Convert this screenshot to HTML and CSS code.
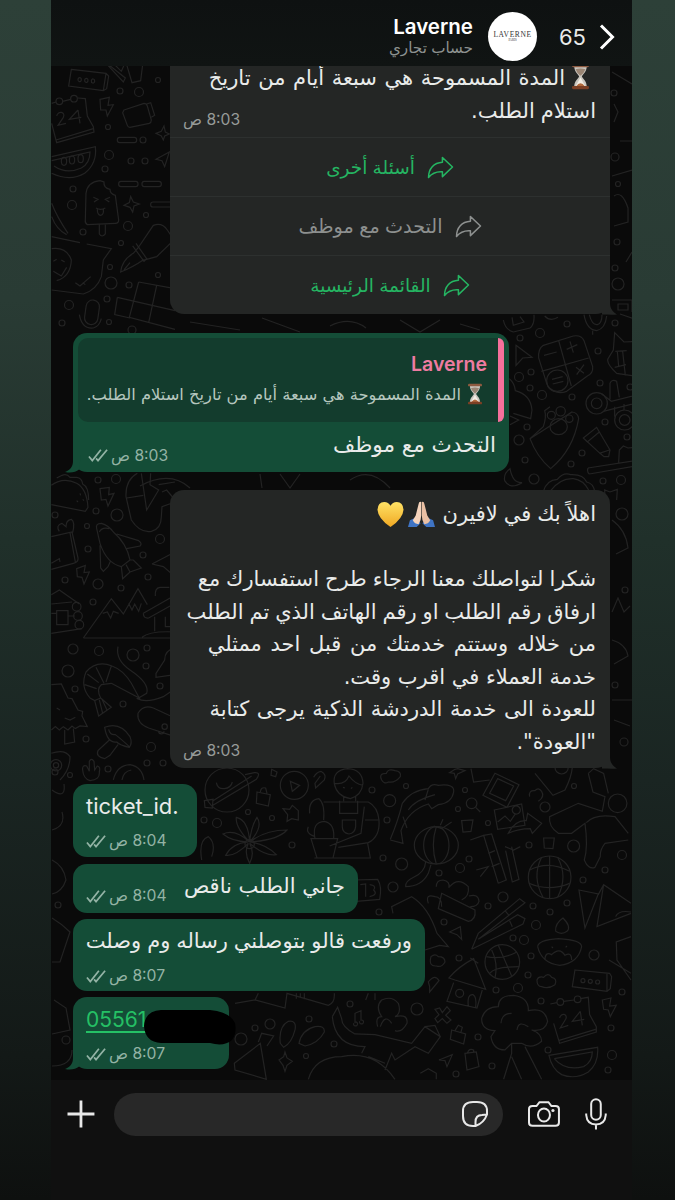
FILE: index.html
```html
<!DOCTYPE html>
<html lang="ar" dir="rtl">

<head>
  <meta charset="UTF-8">
  <meta name="viewport" content="width=device-width, initial-scale=1.0">
  <title>Laverne</title>
  <link rel="stylesheet" href="styles.css">
</head>

<body>
  <svg class="defs" width="0" height="0">
    <defs>
      <symbol id="hourglass" viewBox="0 0 24 30">
        <path d="M5 3C5 10 9 12 10.500 15C9 18 5 20 5 27H19C19 20 15 18 13.500 15C15 12 19 10 19 3Z" fill="#c9c5be" />
        <path d="M6.500 7Q12 5 17.500 7Q16 11 12.500 14H11.500Q8 11 6.500 7Z" fill="#9a8574" />
        <path d="M12 16L17.500 26H6.500Z" fill="#f2ede4" />
        <path d="M7 26Q12 19 17 26Z" fill="#b0683c" />
        <rect x="2.500" y="1" width="19" height="3.600" rx="1.600" fill="#8d5a40" />
        <rect x="2.500" y="25.500" width="19" height="3.600" rx="1.600" fill="#7c3f24" />
      </symbol>
      <symbol id="forward" viewBox="0 0 28 24">
        <path d="M16 1.500L26.500 11.500L16 21.500V16.500C9 16 5 18 1.500 22.500C1.500 13 7 7 16 6.500Z" fill="none" stroke="currentColor" stroke-width="1.600" stroke-linejoin="round" />
      </symbol>
      <symbol id="ticks" viewBox="0 0 22 15">
        <path d="M1 8.500L4.500 12.800L13.500 1.500M8.500 10.500L10.500 12.800L20 1.500" fill="none" stroke="currentColor" stroke-width="1.800" />
      </symbol>
      <symbol id="tail-out" viewBox="0 0 16 18">
        <path d="M8 0V6C8 12 5 15 0 17C6 18.500 11 17 14 14.500L16 0Z" fill="#144d37" />
      </symbol>
      <symbol id="tail-in" viewBox="0 0 16 18">
        <path d="M8 0V6C8 12 11 15 15 17.500C10 18 5 17.500 0 17.500V0Z" fill="#242625" />
      </symbol>
    </defs>
  </svg>

  <div class="phone">
    <header class="header">
      <svg class="back" viewBox="0 0 16 28"><path d="M2 2.500L13.500 14L2 25.500" /></svg>
      <span class="count">65</span>
      <div class="avatar"><b>LAVERNE</b><i>PARIS</i></div>
      <div class="contact">
        <h1>Laverne</h1>
        <p>حساب تجاري</p>
      </div>
    </header>

    <main class="chat">
      <svg class="wallpaper" viewBox="51 66 581 1014">
        <!-- top left -->
        <g transform="translate(50 60) scale(.3333)">
          <path d="M64 28L168 40L176 48L170 86L160 92L56 78ZM168 40L160 92M84 58a5 6 0 1 0 10 2a5 6 0 1 0 -10 -2M104 60a5 6 0 1 0 10 2a5 6 0 1 0 -10 -2M124 62a5 6 0 1 0 10 2a5 6 0 1 0 -10 -2" />
          <path d="M5 130L18 126M38 124L62 118M84 114L106 116L112 168L130 200L132 216L20 248L5 190M18 240L130 206" />
          <circle cx="28" cy="124" r="10" /><circle cx="72" cy="116" r="10" />
          <path d="M20 168C24 150 48 156 40 172L24 196L48 190M84 150L58 178L94 172M84 150L90 190" stroke-width="8" />
          <path d="M150 118L178 112L174 136L190 134L172 168L168 150L152 150Z" />
          <path d="M222 150L282 130Q290 130 292 138L304 180Q304 188 298 190L240 202Q234 202 232 196L218 158ZM290 132L302 128L314 166L304 172" />
          <path d="M5 290L136 260Q142 310 104 340Q60 366 5 340M5 302L120 276Q120 310 94 324Q50 344 12 318" />
          <ellipse cx="42" cy="304" rx="8" ry="12" /><ellipse cx="66" cy="300" rx="8" ry="12" /><ellipse cx="92" cy="296" rx="8" ry="12" />
          <rect x="202" y="232" width="58" height="16" rx="7" /><rect x="206" y="364" width="58" height="16" rx="7" /><rect x="276" y="364" width="58" height="16" rx="7" /><rect x="302" y="426" width="70" height="15" rx="7" />
          <path d="M318 220L334 214L342 198L346 216L358 222L344 228L340 240L334 228ZM318 298L358 276L344 320L336 302Z" />
          <path d="M108 400Q112 366 150 362L162 366Q160 384 180 388Q180 402 196 406L206 480Q206 490 196 490L112 494Q104 490 106 480ZM148 494V522Q156 534 166 522V492M130 412L144 418L132 426M180 412L166 418L178 426M138 444Q152 452 166 444M142 448Q142 466 152 466Q162 464 160 448" />
          <path d="M222 436L238 428L242 410L250 426L268 432L252 438L248 456L240 442Z" />
          <path d="M5 530L90 548M110 552L184 566L160 600L154 650Q140 690 100 702L5 690M76 668L90 678L122 650M98 668L106 674M5 566Q50 560 64 600Q62 650 20 662M10 604L20 598M34 600L44 606M10 634L34 648L50 622" />
          <path d="M212 636Q216 600 250 580L264 564L310 496Q336 486 352 510L372 540L320 590L276 602Q250 620 212 636ZM248 558L282 604L290 596L258 550M222 630L240 608" />
          <path d="M266 666L375 686M266 666L238 772L375 808M202 712L375 752M202 712L194 764L240 774M320 676L296 788" />
          <rect x="106" y="720" width="40" height="74" rx="20" transform="rotate(8 126 757)" /><path d="M88 764Q96 808 130 804Q148 800 154 776" />
          <path d="M172 14L220 66L226 54L176 14M230 14L246 68L272 62L278 14M196 16L214 34L222 16" />
          <path d="M5 430Q20 470 54 520M5 470Q20 510 50 524" />
        </g>
        <!-- right of the first reply -->
        <g transform="translate(500 310) scale(.3333)">
          <path d="M130 106L220 78Q244 74 252 92L278 170Q280 190 262 198L200 244Q180 252 162 244Q146 240 140 220L116 144Q114 116 130 106ZM176 92L214 228M124 184L266 144M132 136L170 126M200 118L232 104M210 94L220 128M228 172L252 190M252 164L230 194" />
          <circle cx="172" cy="212" r="32" /><path d="M156 208L188 200M158 222L190 214" />
          <path d="M48 106L96 142L68 144L48 166ZM28 206Q44 220 46 242Q92 254 96 300L92 326L40 310M30 318L56 330L30 344" />
          <path d="M344 68L372 96L420 94V200L350 190Q318 160 324 146L340 120ZM346 124L380 122M352 124L356 168M368 124L376 196M344 172L378 164" />
          <path d="M90 386L130 350Q140 320 134 302L150 290M216 306Q234 308 236 326Q220 420 152 476Q110 440 90 386Z" />
          <circle cx="154" cy="316" r="12" /><circle cx="182" cy="304" r="14" /><circle cx="208" cy="326" r="11" /><ellipse cx="176" cy="350" rx="26" ry="24" />
          <path d="M250 384L290 352L330 420L326 440H312L300 430ZM250 384L262 396L298 366M298 430L328 420" />
          <circle cx="290" cy="280" r="32" /><circle cx="290" cy="280" r="16" /><circle cx="374" cy="330" r="30" /><circle cx="374" cy="330" r="16" />
          <path d="M306 252L334 274L420 252M310 304L342 296L420 276M330 268V220Q336 206 350 214L358 262M344 290V320M372 282V300" />
          <path d="M264 474L420 450M268 492L420 466M264 474Q260 486 268 492M356 458L358 420L370 408L384 414L420 410" />
          <path d="M30 476Q10 490 14 512Q30 540 66 518Q38 520 30 476Z" />
          <path d="M130 544Q140 510 172 508Q190 486 212 494Q250 492 260 516Q280 520 284 544M150 544Q180 504 220 506Q250 510 266 540M316 570L314 540L330 546L352 538L350 570" />
          <path d="M252 14Q260 60 290 62Q316 56 320 18M268 14Q276 46 292 44Q306 40 306 14M278 62V74M360 12L400 26M10 30Q16 60 40 66L90 54Q104 44 102 14M36 22L40 46L72 36L60 20M134 18Q150 36 174 22" />
        </g>
        <!-- left of the welcome text -->
        <g transform="translate(50 470) scale(.3333)">
          <path d="M4 46Q40 20 80 40Q110 56 114 112L106 124L4 104M20 24L36 16Q50 10 60 22L80 22Q96 24 98 42Q116 50 116 90M90 70L92 76M80 92L84 96M98 88L102 92" />
          <path d="M150 56L178 52L176 74L192 70L174 108L168 88L154 90Z" />
          <path d="M262 10Q226 30 228 80L244 150Q270 190 304 184Q334 176 334 140L336 110L375 96M274 10L290 120L326 60L300 44L302 10M230 84L280 76M326 44L375 36M336 66L350 60L375 90" />
          <path d="M4 200L66 186L84 264Q86 276 70 280L4 298M60 188L76 276M28 184Q16 166 36 160L48 170Q48 150 64 148Q76 156 68 188M4 280L28 266L30 276" />
          <path d="M140 176Q136 160 154 160Q176 166 190 186Q230 220 240 270L214 290Q170 280 150 220ZM200 192L266 212Q278 220 270 228L230 236M150 226L152 294L160 304L174 290L182 272M214 290L218 326L240 306L274 294L250 270L240 270M228 284L240 306M148 186Q156 170 178 176" />
          <path d="M80 296L106 286L102 308L118 306L102 342L96 322L82 320Z" />
          <path d="M100 504L184 386L220 432L264 356L292 404M100 504H375M158 430L172 426L182 444L190 424L206 430M236 400L246 420L254 402L266 424L274 400M316 378Q314 354 330 352H358M280 430L375 376M280 430Q280 446 296 444L375 400M314 440V484M346 440V470H375M276 502Q300 482 375 486" />
          <path d="M4 374L28 360L88 402M4 402L66 396M20 422H54V464H20ZM4 490L96 476M4 430H20M54 438H74" />
          <circle cx="80" cy="410" r="13" /><circle cx="84" cy="438" r="13" /><circle cx="88" cy="464" r="13" />
          <path d="M4 644L34 642L54 684L66 686L84 720L98 724L96 738L112 770L90 768L76 776L66 768L54 780L40 770L28 780L16 770L4 780M44 780V822L74 816L70 776M20 714L30 720M44 744L60 750L76 742" />
          <path d="M186 588Q140 570 108 606Q90 650 120 684L134 692L152 684Q138 656 154 644L184 640M186 588Q220 600 244 640L268 684L222 660L184 640M112 612L146 638M104 644L140 656M138 592L162 640M184 588L168 636M134 692L146 738L184 712L152 684M148 690L158 730M156 688L172 722M204 530Q196 570 240 600Q300 640 290 670L262 686Q290 700 340 680L375 656" />
          <path d="M164 772Q210 754 240 800Q248 820 238 832Q210 826 200 816Q172 820 164 772ZM178 810L144 842Q136 860 164 866L180 856L204 824M176 778Q180 796 196 794Q212 806 238 830" />
          <path d="M375 800L296 774Q260 760 264 730Q280 702 310 714L375 744M375 534Q344 540 344 570L318 610V622L375 614M336 770a8 8 0 1 0 16 0a8 8 0 1 0 -16 0M326 784a8 8 0 1 0 16 0M306 282L375 246M306 282L340 290L375 320" />
          <path d="M4 850Q44 836 60 860Q60 900 30 930M98 900Q96 884 110 888L118 904V874Q124 862 132 874L134 900L142 888Q152 890 148 906Q150 930 120 932Q100 926 98 900M190 930Q200 886 240 884Q276 890 282 930M216 930Q220 904 244 900" />
          <circle cx="18" cy="886" r="17" /><circle cx="18" cy="886" r="8" />
        </g>
        <!-- lower part -->
        <g transform="translate(195 760) scale(.3333)">
          <circle cx="96" cy="90" r="66" /><path d="M64 68Q68 88 88 86Q108 84 112 66M52 124L170 48M50 138L184 58Q200 36 178 38L150 44M28 122L54 118L52 144L30 142Z" />
          <path d="M186 96L226 104L220 138L184 130ZM196 96Q198 80 212 84L216 100M230 28L246 36L242 50L228 46ZM356 52Q364 36 378 34Q396 44 388 60L362 84L360 70L376 48" />
          <circle cx="298" cy="76" r="42" /><path d="M286 64L314 76L292 94Z" />
          <path d="M418 72Q412 30 458 26Q502 28 504 70Q500 106 466 116Q426 110 418 72ZM418 70Q450 76 462 48Q480 72 504 76M446 110V124M482 108V124M386 126H520Q548 140 552 180Q556 230 520 248L430 262M434 122V160H488V122M442 180H482V200Q480 220 462 222Q442 218 442 200ZM508 140L498 220L404 258M510 180H550M358 294H526L518 250M348 236H428L414 294H366ZM360 236Q350 186 388 184Q420 190 416 236M344 160Q340 120 372 116Q390 130 386 180M360 230Q330 220 340 200M444 82L450 84M468 86L472 82" />
          <path d="M264 146L284 148L292 136L310 152V180L290 176L276 184L278 164Z" />
          <path d="M164 246Q120 200 124 172Q160 180 164 246Q168 200 186 172Q206 200 164 246Q210 210 276 210Q250 240 164 246Q210 250 244 284Q210 290 164 250Q180 280 164 310Q146 280 160 250Q120 290 92 286Q110 250 160 246Q110 244 84 222Q120 206 164 246Z" /><circle cx="164" cy="252" r="14" />
          <path d="M560 60Q550 40 574 40Q580 24 600 32Q620 34 616 50Q600 70 580 66Q568 74 560 60Z" />
          <circle cx="584" cy="122" r="18" /><circle cx="620" cy="312" r="18" />
          <path d="M586 238Q610 180 622 130Q650 90 700 86Q710 68 730 76Q780 70 776 96Q770 130 730 134L710 146L700 132Q640 150 618 212L624 250L586 240M700 88L690 120M640 150Q660 120 720 104M624 170L636 204" />
          <ellipse cx="724" cy="256" rx="66" ry="56" /><ellipse cx="724" cy="256" rx="38" ry="56" /><path d="M724 200Q706 256 724 312M716 198L740 206L770 186M736 196L744 178M692 306Q690 336 656 352Q630 364 632 380Q680 380 700 340L708 314" />
          <path d="M800 182L834 180L828 214L804 216ZM788 26L810 32L788 42L782 56L778 40L764 38L780 28ZM1046 234L1078 234L1074 266L1048 264Z" />
          <circle cx="830" cy="130" r="16" /><path d="M842 142L856 156M828 26L836 66L884 60M900 40L972 74L936 142L864 106ZM908 56L956 78L932 122L884 100ZM898 150L980 132L990 196L908 208ZM908 186L930 168L946 184L962 160M952 152a12 12 0 1 0 24 -4a12 12 0 1 0 -24 4M940 220Q960 180 994 182L998 160L1040 190L1012 220L1006 206Q970 206 940 220Z" />
          <path d="M1020 40L1074 106L1110 90Q1130 50 1132 22M1080 22a20 20 0 1 0 40 0M1004 110Q1000 90 1020 92Q1030 80 1040 94Q1050 110 1030 124M1180 40L1194 96L1230 110L1222 154L1150 130L1064 170Q1060 200 1090 220L1130 220L1170 190Q1180 260 1168 300Q1180 330 1200 322L1216 290Q1214 270 1230 250L1300 240M1180 40L1196 26L1226 40L1240 100M1174 188Q1200 160 1260 170L1300 220" />
          <circle cx="1268" cy="130" r="28" /><circle cx="1136" cy="258" r="18" />
          <path d="M826 240L866 226L910 370M866 226L890 222L934 360L910 370M880 280L900 272M890 320L914 310M932 272L952 366L972 358L950 260M930 260L956 270L976 260M844 330L880 320L856 350" />
          <circle cx="1064" cy="352" r="64" /><path d="M1004 330Q1060 300 1124 334M1002 370Q1060 396 1124 370M1040 292Q1010 350 1044 412M1088 292Q1120 350 1088 412M1064 288V416" />
          <path d="M476 360L548 358Q562 380 554 418L484 424M496 374L512 372V410M524 374Q546 376 536 390Q550 404 524 410M594 460L590 440L650 410Q700 440 726 520L760 560L734 556L690 570" />
          <path d="M700 430Q690 400 720 410Q740 410 740 440M724 380Q724 360 744 360Q766 364 762 384M764 380Q790 350 820 380Q824 410 800 420M822 408Q850 400 852 424Q848 440 826 440M740 400L840 450Q844 480 820 484L730 446Z" />
          <path d="M830 568L850 520L974 416L990 428L850 538M850 538L968 464L990 476L984 492L830 568M930 452L942 466M944 482L952 500M764 516L796 500L800 538L786 524Z" />
          <circle cx="922" cy="606" r="52" /><path d="M874 590Q920 600 966 576M884 640Q900 620 972 620M910 556L950 648M890 570Q910 610 900 654" />
          <path d="M1152 390L1210 402L1170 504ZM1210 404L1226 374L1308 430M1226 374L1206 500L1308 460M1262 470Q1270 450 1308 456M1028 560Q1030 540 1090 536Q1160 540 1160 560Q1150 610 1094 616Q1040 610 1028 560M1082 514Q1080 490 1104 474Q1130 500 1116 514Q1100 526 1082 514M1050 600Q1050 574 1070 584Q1094 560 1110 586Q1130 574 1130 600M1070 560L1074 564M1112 562L1116 558" />
          <path d="M708 590Q720 580 730 590Q750 590 750 606Q740 624 724 618Q700 620 708 590ZM762 654Q790 620 836 596L872 688L780 660ZM776 668L756 724L846 744L862 690M820 738Q816 702 834 704Q846 710 842 742M826 594L850 610M782 700a12 12 0 1 0 24 0a12 12 0 1 0 -24 0M700 666Q720 640 732 662L704 696L704 680Z" />
          <path d="M1026 660Q1030 648 1046 652Q1060 636 1070 652Q1088 656 1080 674Q1060 688 1040 680Q1026 680 1026 660ZM1140 630L1244 640L1250 650L1246 686L1236 694L1132 680ZM1236 642V692M1158 662a6 6 0 1 0 12 0a6 6 0 1 0 -12 0M1180 664a6 6 0 1 0 12 0a6 6 0 1 0 -12 0M1202 666a6 6 0 1 0 12 0a6 6 0 1 0 -12 0M1308 530L1264 546L1266 600L1308 660M1242 600L1308 640" />
          <path d="M910 740Q910 706 956 706Q1002 712 1000 752Q1050 740 1058 784Q1050 816 1010 810Q1040 820 1040 844Q1010 870 980 850L950 850L930 870Q894 870 888 830L900 812Q860 810 860 776Q870 740 910 740ZM918 790Q920 760 950 760M966 810Q970 780 1000 800M950 850V880L926 958M990 860L1040 958M950 890L980 958" />
          <path d="M1066 732L1086 728M1106 724L1138 720M1156 716L1180 712L1184 764L1204 800V816L1094 850L1076 790M1090 842L1202 808" /><circle cx="1096" cy="726" r="10" /><circle cx="1148" cy="718" r="10" />
          <path d="M1094 774C1098 756 1120 762 1112 778L1096 804L1120 796M1156 754L1132 784L1168 778M1156 754L1162 796" stroke-width="7" />
          <path d="M1222 720L1248 714L1244 738L1264 736L1246 770L1240 750L1226 748ZM1062 886L1208 862Q1212 910 1180 936Q1140 960 1100 944Q1070 926 1062 886ZM1078 896L1192 876Q1192 906 1166 920Q1110 934 1078 896" />
          <path d="M720 748L734 744L742 758L756 740L766 752L752 766L768 780L756 790L742 776L728 788L720 776L732 764ZM770 810L812 822L806 852L766 838ZM780 812L790 796L802 802L798 816M810 880L844 876L852 920L816 930ZM818 878Q822 864 836 870V878M732 900L772 884L756 920L750 902Z" />
          <path d="M412 770L428 742L440 776Q440 800 480 822L540 824L650 850L690 800L736 830L700 880L660 860L600 900L590 880L570 930M412 770Q420 860 510 860L500 880M548 800Q540 770 560 770Q540 740 560 720Q590 706 610 730Q620 760 600 770Q640 760 636 790Q620 820 600 812M556 800Q570 760 590 790M690 800L720 796L736 830M340 958Q360 890 440 890Q540 870 600 958M520 890L570 910M480 790V760L498 752V782M476 790a6 6 0 1 0 6 -4M494 784a6 6 0 1 0 6 -4M520 700L512 720M540 700V720" />
          <path d="M256 850Q250 800 280 784Q306 780 300 810Q290 850 266 862ZM312 850Q320 810 360 800Q390 796 388 816Q370 850 330 858ZM118 910L196 850L214 958L120 930ZM190 846L200 820L236 828L216 858M252 900L266 890L270 876L276 894L292 904L276 916L270 934L264 916ZM120 730L180 720L270 744L276 700L400 736Q420 730 418 700M190 700L180 720M304 700V716M316 700V712M328 700V718M676 940L700 926L724 940V958M20 300Q10 240 40 230Q64 250 50 290" />
        </g>
        <!-- narrow strips around the bubbles -->
        <path d="M612 72L632 84M614 104L618 112L614 122M620 141H632M612 176L632 170M614 196Q622 190 628 208V222L614 226M626 262L632 252M612 300H632V312M618 304V310H628V304ZM612 520Q626 530 628 548L616 554M612 612L618 598L624 612L630 606M612 640Q626 644 628 656L614 664M612 700H632M614 720L630 726M52 790Q66 800 64 784M52 830Q66 826 62 812M52 860Q64 866 66 880Q62 892 52 894M52 918Q62 924 70 932L60 962H52M54 1000L66 1008L70 1030L52 1034M52 1066Q72 1066 72 1050M190 322L240 330M262 318L300 332M330 326Q350 316 366 328M400 320L420 332L440 320M460 324L480 330M140 486Q170 470 190 488M260 474L262 488M280 474L290 488L300 474M350 480Q370 466 390 488" />
        <g id="dots"></g>
      </svg>

      <div class="bubble in buttons">
        <div class="body">
          <div class="text">
            <p class="wide"><svg class="glass"><use href="#hourglass" /></svg><span>المدة المسموحة هي سبعة أيام من تاريخ</span></p>
            <p class="tight">استلام الطلب.</p>
          </div>
          <div class="meta"><span>8:03 ص</span></div>
        </div>
        <div class="action"><svg><use href="#forward" /></svg><span>أسئلة أخرى</span></div>
        <div class="action used"><svg><use href="#forward" /></svg><span>التحدث مع موظف</span></div>
        <div class="action"><svg><use href="#forward" /></svg><span>القائمة الرئيسية</span></div>
        <svg class="tail"><use href="#tail-in" /></svg>
      </div>

      <div class="bubble out reply">
        <div class="quote">
          <h2>Laverne</h2>
          <p><svg class="glass"><use href="#hourglass" /></svg><span>المدة المسموحة هي سبعة أيام من تاريخ استلام الطلب.</span></p>
        </div>
        <div class="body">
          <div class="text"><p>التحدث مع موظف</p></div>
          <div class="meta"><span>8:03 ص</span><svg><use href="#ticks" /></svg></div>
        </div>
        <svg class="tail"><use href="#tail-out" /></svg>
      </div>

      <div class="bubble in welcome">
        <div class="body">
          <div class="text">
            <p class="tight hello"><span>اهلاً بك في لافيرن</span>
              <svg viewBox="0 0 30 28">
                <path d="M1 27L3 20L9 17L14 23L10 27Z" fill="#3f74c4" /><path d="M29 27L27 20L21 17L16 23L20 27Z" fill="#3f74c4" />
                <path d="M14.700 1Q12.500 0 12 3L9 15L6 20Q8 24 12 24Q14.700 20 14.700 15Z" fill="#f5d3bb" /><path d="M15.300 1Q17.500 0 18 3L21 15L24 20Q22 24 18 24Q15.300 20 15.300 15Z" fill="#eac0a4" />
              </svg>
              <svg viewBox="0 0 30 28">
                <defs><linearGradient id="gold" x2="0" y2="1"><stop offset="0" stop-color="#ffe265" /><stop offset="1" stop-color="#f0a823" /></linearGradient></defs>
                <path d="M15 27Q2 18 1.500 9Q2 1 8.500 1Q13 1 15 5Q17 1 21.500 1Q28 1 28.500 9Q28 18 15 27Z" fill="url(#gold)" />
              </svg>
            </p>
            <p>&nbsp;</p>
            <p class="tight">شكرا لتواصلك معنا الرجاء طرح استفسارك مع</p>
            <p class="tight">ارفاق رقم الطلب او رقم الهاتف الذي تم الطلب</p>
            <p class="wider">من خلاله وستتم خدمتك من قبل احد ممثلي</p>
            <p>خدمة العملاء في اقرب وقت.</p>
            <p class="wide">للعودة الى خدمة الدردشة الذكية يرجى كتابة</p>
            <p>"العودة".</p>
          </div>
          <div class="meta"><span>8:03 ص</span></div>
        </div>
        <svg class="tail"><use href="#tail-in" /></svg>
      </div>

      <div class="bubble out ticket">
        <p dir="ltr">ticket_id.</p>
        <div class="meta"><span>8:04 ص</span><svg><use href="#ticks" /></svg></div>
      </div>

      <div class="bubble out missing">
        <p>جاني الطلب ناقص</p>
        <div class="meta"><span>8:04 ص</span><svg><use href="#ticks" /></svg></div>
      </div>

      <div class="bubble out raised">
        <p class="tight">ورفعت قالو بتوصلني رساله وم وصلت</p>
        <div class="meta"><span>8:07 ص</span><svg><use href="#ticks" /></svg></div>
      </div>

      <div class="bubble out number">
        <p dir="ltr"><a>05561</a></p>
        <div class="meta"><span>8:07 ص</span><svg><use href="#ticks" /></svg></div>
        <svg class="scribble" viewBox="0 0 92 36"><path d="M17 1H66Q86 3 91 14Q93 24 88 31Q80 38 66 34H17Q1 33 0 17Q1 2 17 1Z" /></svg>
        <svg class="tail"><use href="#tail-out" /></svg>
      </div>
    </main>

    <footer class="composer">
      <svg class="mic" viewBox="0 0 22 32"><rect x="6.200" y="1.200" width="9.600" height="20.500" rx="4.800" /><path d="M1.200 15.500V17Q2 26.500 11 26.500Q20 26.500 20.800 17V15.500M11 26.500V31.500" /></svg>
      <svg class="camera" viewBox="0 0 32 26"><path d="M4.500 5H8.500L11.500 1.200H20.500L23.500 5H27.500Q31 5 31 8V21.500Q31 24.800 27.500 24.800H4.500Q1 24.800 1 21.500V8Q1 5 4.500 5Z" /><ellipse cx="16" cy="14" rx="6" ry="6.600" /><circle class="dot" cx="25" cy="9.500" r="1.600" /></svg>
      <div class="field">
        <svg viewBox="0 0 26 26"><path d="M13.500 25H11Q1 25 1 15V10Q1 1 11 1H15Q25 1 25 10V13.500Q22 22 13.500 25ZM13.500 25V21Q13.500 14 20 14L25 13.500" /></svg>
      </div>
      <svg class="plus" viewBox="0 0 28 28"><path d="M14 .5V27.500M.5 14H27.500" /></svg>
    </footer>
  </div>

  <script>
    // loose bubbles between the doodles: x, y, r
    const dots = [
      [120, 91, 3], [139, 92, 4.500], [158, 80, 2.500], [108, 127, 2.500], [143, 140, 3], [109, 155, 4.500], [105, 169, 3],
      [131, 161, 3], [145, 161, 3], [73, 189, 3], [72, 205, 4.500], [83, 232, 3], [128, 226, 4.500], [146, 215, 2.500], [121, 243, 2.500],
      [110, 267, 2.500], [111, 283, 6], [129, 285, 3], [158, 275, 2.500], [69, 305, 4.500], [107, 299, 3], [62, 323, 3], [109, 322, 2.500], [132, 330, 4],
      [540, 333, 4.500], [567, 324, 3], [615, 323, 3], [598, 351, 3], [520, 338, 3], [519, 377, 4.500], [531, 372, 3], [530, 388, 3],
      [542, 395, 4.500], [572, 397, 3], [600, 383, 3], [605, 422, 3], [527, 427, 3], [519, 440, 5], [582, 453, 3], [525, 460, 3],
      [534, 479, 5], [571, 464, 3], [627, 437, 3], [603, 481, 3], [621, 480, 4.500], [630, 387, 3],
      [98, 480, 3], [116, 479, 4.500], [55, 515, 3], [96, 511, 3], [117, 515, 6], [87, 526, 2.500], [88, 549, 3], [160, 539, 4.500],
      [143, 555, 3], [65, 580, 3], [98, 584, 5], [121, 588, 3], [148, 577, 3], [93, 602, 3], [73, 649, 5], [99, 651, 4.500], [133, 655, 6],
      [147, 648, 3], [146, 666, 3], [68, 671, 6], [75, 689, 3], [123, 704, 3], [160, 686, 3], [86, 739, 3], [151, 747, 4.500],
      [108, 769, 3], [147, 763, 3], [163, 763, 3], [204, 820, 3], [217, 823, 4.500], [248, 812, 2.500], [272, 818, 2.500], [292, 845, 3],
      [387, 820, 3], [383, 858, 3], [372, 790, 3], [406, 786, 2.500], [458, 809, 2.500], [465, 790, 2.500], [488, 823, 2.500],
      [469, 859, 3], [460, 868, 4.500], [439, 873, 3], [545, 807, 5], [574, 786, 2.500], [529, 845, 3], [622, 855, 4.500], [605, 870, 3],
      [583, 880, 3], [393, 887, 5], [503, 897, 5], [488, 906, 3], [533, 906, 3], [550, 912, 3], [567, 903, 3], [444, 922, 3],
      [379, 912, 3], [536, 925, 4.500], [513, 938, 3], [524, 940, 4.500], [459, 958, 3], [594, 955, 5], [531, 956, 3], [528, 975, 3],
      [518, 988, 4.500], [496, 990, 3], [541, 1001, 3], [622, 992, 3], [350, 1004, 3], [417, 1009, 6], [611, 1028, 3], [612, 1055, 4.500],
      [270, 1024, 5], [255, 1028, 3], [309, 1019, 3], [241, 1039, 6], [334, 1044, 3], [306, 1056, 2.500], [478, 1037, 3], [492, 1066, 3],
      [548, 1050, 3], [456, 1074, 3], [608, 1070, 3], [614, 93, 3], [615, 157, 4], [618, 184, 2.500], [617, 242, 3], [615, 268, 3],
      [618, 284, 6], [622, 514, 6], [625, 590, 3], [615, 685, 3], [624, 742, 4], [55, 772, 3], [70, 775, 2.500], [58, 905, 3], [66, 1040, 4]
    ];
    document.getElementById('dots').innerHTML = dots
      .map(d => `<circle cx="${d[0]}" cy="${d[1]}" r="${d[2]}" />`)
      .join('');
  </script>
</body>

</html>
```

FILE: styles.css
```css
body {
  margin: 0;
  height: 1200px;
  overflow: hidden;
  background: linear-gradient(#2d4038, #293b34 25%, #20302a 45%, #1a2522 65%, #131917 88%, #0e100f);
  color: #e9ebea;
  font-family: Inter, "DejaVu Sans", sans-serif;
  font-size: 21px;
}

p,
h1,
h2 {
  margin: 0;
  white-space: nowrap;
}

.defs {
  position: absolute;
}

.phone {
  display: flex;
  flex-direction: column;
  width: 581px;
  height: 1200px;
  margin: 0 43px 0 51px;
  background: #101010;
}

/* header */
.header {
  display: flex;
  align-items: center;
  height: 66px;
  padding: 7px 17px 0 0;
  box-sizing: border-box;
  background: linear-gradient(#0e1111, #101413);
}

.back {
  width: 16px;
  height: 28px;
  fill: none;
  stroke: #fff;
  stroke-width: 3;
}

.count {
  margin-right: 13px;
  width: 28px;
  font-size: 22px;
}

.avatar {
  display: flex;
  flex-direction: column;
  align-items: center;
  justify-content: center;
  width: 49px;
  height: 49px;
  margin-right: 21px;
  border-radius: 50%;
  background: #fff;
  color: #333;
  font-family: "Liberation Serif", serif;
  line-height: 1;
}

.avatar b {
  font-size: 7.5px;
  font-weight: normal;
  letter-spacing: 0.6px;
}

.avatar i {
  font-size: 3px;
  font-style: normal;
}

.contact {
  margin-right: 15px;
  margin-top: -2px;
}

.contact h1 {
  font-size: 20.5px;
  line-height: 24px;
  font-weight: 600;
  color: #fff;
}

.contact p {
  font-size: 15.2px;
  line-height: 18px;
  color: #8d9290;
}

/* chat */
.chat {
  position: relative;
  display: flex;
  flex-direction: column;
  justify-content: flex-end;
  height: 1014px;
  padding: 0 22px 11px;
  box-sizing: border-box;
  overflow: hidden;
  background: #0a0a0a;
}

.wallpaper {
  position: absolute;
  inset: 0;
  width: 581px;
  height: 1014px;
}

.wallpaper path,
.wallpaper circle,
.wallpaper ellipse,
.wallpaper rect {
  fill: none;
  stroke: #232323;
  stroke-width: 1.2;
}

.wallpaper > g[transform] * {
  stroke-width: 3.6;
}

.bubble {
  position: relative;
  flex: none;
  border-radius: 14px;
  box-sizing: border-box;
}

.in {
  align-self: flex-start;
  width: 440px;
  background: #242625;
}

.out {
  align-self: flex-end;
  background: #144d37;
}

.tail {
  position: absolute;
  bottom: -1px;
  width: 16px;
  height: 18px;
}

.in .tail {
  right: -8px;
}

.out .tail {
  left: -8px;
}

/* text and time share one cell */
.body {
  display: grid;
  padding: 0 14px;
}

.text,
.body .meta {
  grid-area: 1 / 1;
}

.text,
.quote p,
.missing p,
.raised p {
  font-family: "DejaVu Sans", sans-serif;
}

.text p {
  line-height: 32.5px;
}

.body .meta {
  align-self: end;
  justify-self: end;
}

.meta {
  display: flex;
  align-items: center;
  gap: 2px;
  font-size: 15.7px;
  line-height: 18px;
  color: #979b99;
}

.out .meta {
  color: #93b3a5;
}

.meta svg {
  width: 21px;
  height: 15px;
}

.wide {
  word-spacing: 0.9px;
}

.wider {
  word-spacing: 2px;
}

.tight {
  word-spacing: -0.8px;
}

.glass {
  width: 23px;
  height: 27px;
  margin: 0 4px;
  vertical-align: -5px;
}

.buttons {
  margin-bottom: 19px;
  border-radius: 0 0 14px 14px;
}

.buttons .body {
  padding-bottom: 10px;
  height: 65px;
}

.buttons .meta {
  margin-bottom: -2px;
}

.action {
  display: flex;
  align-items: center;
  justify-content: center;
  gap: 12px;
  height: 59px;
  box-sizing: border-box;
  border-top: 1px solid #2d302f;
  color: #25b562;
  font-size: 18.5px;
}

.action svg {
  width: 27px;
  height: 23px;
}

.used {
  color: #8d908f;
  font-size: 19.2px;
}

.reply {
  width: 436px;
  height: 139px;
  margin-bottom: 18px;
  padding: 5px;
}

.quote {
  height: 84px;
  padding: 13px 11px 0 0;
  box-sizing: border-box;
  border-right: 6px solid #f4709b;
  border-radius: 10px 6px 6px 10px;
  background: #133c2d;
}

.quote h2 {
  font-size: 19.5px;
  line-height: 26px;
  font-weight: 600;
  color: #ee7ba1;
}

.quote p {
  display: flex;
  align-items: center;
  height: 34px;
  font-size: 16.3px;
  color: #b5c6be;
}

.quote .glass {
  width: 18px;
  height: 22px;
  margin: 0 3px 0 5px;
}

.reply .body {
  padding: 7px 8px 0 10px;
}

.reply .text p {
  font-size: 21.5px;
}

.reply .body .meta {
  margin-bottom: -3px;
}

.welcome {
  height: 278px;
  margin-bottom: 16px;
  padding-top: 8px;
}

.welcome .meta {
  margin-bottom: -2px;
}

.in .meta {
  margin-left: -1px;
}

.hello {
  display: flex;
  align-items: center;
}

.hello svg {
  width: 29px;
  height: 27px;
  margin-right: 6px;
}

.hello svg + svg {
  margin-right: 2px;
}

.ticket,
.raised,
.number {
  padding: 7px 13px 0;
}

.ticket p,
.raised p,
.number p {
  line-height: 31px;
}

.ticket .meta,
.raised .meta,
.number .meta {
  justify-content: flex-end;
  margin-top: 10px;
}

.ticket {
  width: 124px;
  height: 73px;
  margin-bottom: 7px;
}

.ticket p {
  font-size: 22px;
}

.missing {
  display: flex;
  justify-content: space-between;
  width: 285px;
  height: 49px;
  margin-bottom: 6px;
  padding: 6px 13px 0;
}

.missing p {
  line-height: 32px;
}

.missing .meta {
  padding-top: 17px;
  align-self: flex-start;
}

.raised {
  width: 352px;
  height: 72px;
  margin-bottom: 6px;
}

.number {
  width: 156px;
  height: 72px;
}

.number a {
  color: #25c065;
  text-decoration: underline;
  text-underline-offset: 4px;
}

.scribble {
  position: absolute;
  left: 71px;
  top: 12px;
  width: 92px;
  height: 36px;
}

/* composer */
.composer {
  display: flex;
  align-items: center;
  height: 68px;
  padding: 0 25px 0 16px;
  fill: none;
  stroke: #e8e8e8;
  stroke-width: 2;
}

.mic {
  width: 22px;
  height: 32px;
}

.camera {
  width: 32px;
  height: 26px;
  margin-right: 25px;
}

.dot {
  fill: #e8e8e8;
  stroke: none;
}

.field {
  display: flex;
  align-items: center;
  width: 390px;
  height: 43px;
  margin: 0 25px 0 19px;
  padding-right: 15px;
  box-sizing: border-box;
  border-radius: 22px;
  background: #282828;
}

.field svg {
  width: 26px;
  height: 26px;
}

.plus {
  width: 28px;
  height: 28px;
  stroke-width: 2.8;
}
```
